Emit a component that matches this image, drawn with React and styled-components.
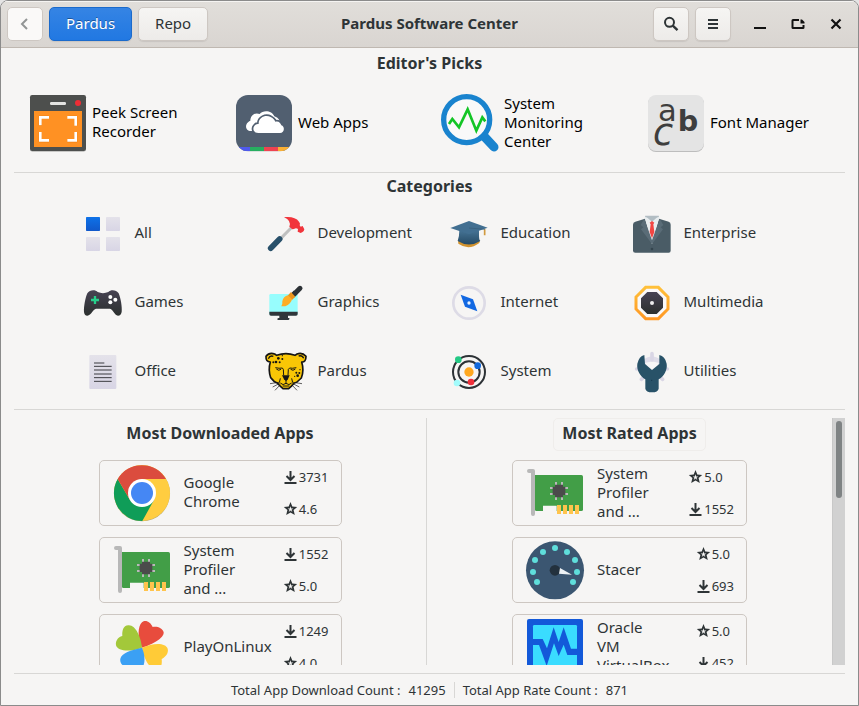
import React from "react";
import styled, { createGlobalStyle, css } from "styled-components";

const Global = createGlobalStyle`
  *, *::before, *::after { box-sizing: border-box; }
  body {
    margin: 0;
    background: #e4e4e4;
    color: #2e3436;
    font-family: "Noto Sans", "Open Sans", sans-serif;
    font-size: 15px;
    line-height: 19px;
  }
  button { font: inherit; color: inherit; cursor: pointer; }
  svg { display: block; flex: none; overflow: visible; }
`;

const Window = styled.div`
  display: flex;
  flex-direction: column;
  height: 100vh;
  min-width: 760px;
  background: #f6f5f4;
  border: 1px solid #8b8b8b;
  border-radius: 8px 8px 0 0;
  overflow: hidden;
`;

const HeaderBar = styled.header`
  display: grid;
  grid-template-columns: 1fr auto 1fr;
  align-items: center;
  flex: none;
  height: 47px;
  padding: 0 6px;
  background: linear-gradient(#e1deda, #d9d5d1);
  border-bottom: 1px solid #bfb8b1;
  box-shadow: inset 0 1px #f5f4f2;
`;

const HeaderGroup = styled.div`
  display: flex;
  align-items: center;
  gap: 6px;
  justify-content: ${(p) => (p.$end ? "flex-end" : "flex-start")};
`;

const HeaderTitle = styled.h1`
  margin: 0;
  padding-bottom: 2px;
  font-size: 15px;
  font-weight: 700;
`;

const HeaderButton = styled.button`
  display: flex;
  align-items: center;
  justify-content: center;
  height: 34px;
  min-width: 36px;
  padding: 0 ${(p) => (p.$text ? 16 : 0)}px ${(p) => (p.$text ? 2 : 0)}px;
  border: 1px solid #cdc7c2;
  border-radius: 5px;
  background: linear-gradient(#f6f5f3, #edebe9);
  box-shadow: 0 1px 1px rgba(0, 0, 0, 0.08);
  ${(p) => p.$flat && css`background: #faf9f8; box-shadow: none; color: #929595;`}
  ${(p) =>
    p.$active &&
    css`
      color: #fff;
      border-color: #1b6acb;
      background: linear-gradient(#3584e4, #2178e2);
      text-shadow: 0 -1px rgba(0, 0, 0, 0.35);
    `}
`;

const WindowControls = styled.div`
  display: flex;
  gap: 6px;
  margin-left: 7px;
`;

const WindowControl = styled.button`
  display: grid;
  place-items: center;
  width: 32px;
  height: 32px;
  padding: 0;
  border: 0;
  background: none;
`;

const Main = styled.main`
  display: flex;
  flex-direction: column;
  flex: 1;
  min-height: 0;
  padding: 5px 13px 0;
`;

const SectionTitle = styled.h2`
  margin: 0;
  font-size: 16px;
  font-weight: 700;
  line-height: 20px;
  text-align: center;
`;

const Rule = styled.hr`
  flex: none;
  width: 100%;
  height: 1px;
  margin: 0;
  border: 0;
  background: #d8d7d5;
`;

const Picks = styled.div`
  display: grid;
  grid-template-columns: repeat(4, 1fr);
  padding: 12px 3px 11px 4px;
`;

const Pick = styled.button`
  display: flex;
  align-items: center;
  gap: 6px;
  height: 76px;
  padding: 0 12px;
  border: 0;
  background: none;
  color: #000;
  text-align: left;
`;

const Label = styled.span`
  padding-bottom: 2px;
  white-space: pre-line;
`;

const CategoryTitle = styled(SectionTitle)`
  margin: 3px 0 2px;
`;

const Categories = styled.div`
  display: grid;
  grid-template-columns: repeat(4, 183px);
  justify-content: center;
  margin-bottom: 4px;
`;

const Category = styled.button`
  display: flex;
  align-items: center;
  gap: 8px;
  height: 69px;
  padding: 0 15px;
  border: 0;
  background: none;
  text-align: left;
`;

const Lists = styled.div`
  display: grid;
  grid-template-columns: 412fr 1px 405fr 13px;
  flex: 1;
  min-height: 0;
  margin: 8px 0;
  overflow: hidden;
`;

const ListColumn = styled.section`
  display: flex;
  flex-direction: column;
  align-items: center;
  min-height: 0;
  overflow: hidden;
`;

const ListTitle = styled.h2`
  flex: none;
  margin: 0 0 9px;
  padding: 5px 8px 7px;
  font-size: 16px;
  font-weight: 700;
  line-height: 19px;
  border: 1px solid ${(p) => (p.$framed ? "#efedeb" : "transparent")};
  border-radius: 5px;
`;

const ListDivider = styled.div`
  background: #d8d7d5;
`;

const Cards = styled.div`
  display: flex;
  flex-direction: column;
  gap: 11px;
  width: ${(p) => p.$width}px;
`;

const Card = styled.button`
  display: flex;
  align-items: center;
  flex: none;
  height: 66px;
  padding: 0 12px 0 14px;
  border: 1px solid #cdc7c2;
  border-radius: 5px;
  background: none;
  text-align: left;
`;

const CardName = styled(Label)`
  flex: 1;
  margin-left: 14px;
`;

const Stats = styled.span`
  display: flex;
  flex-direction: column;
  gap: 14px;
  font-size: 13px;
  line-height: 18px;
`;

const Stat = styled.span`
  display: flex;
  align-items: center;
`;

const ScrollTrack = styled.div`
  padding: 3px 3px 0 3px;
  background: #d1d1d1;
  border-left: 1px solid #c8c8c8;
`;

const ScrollThumb = styled.div`
  width: 6px;
  height: 77px;
  border-radius: 3px;
  background: #7f8384;
`;

const StatusBar = styled.footer`
  display: flex;
  align-items: center;
  justify-content: center;
  gap: 8px;
  flex: none;
  height: 31px;
  font-size: 13px;
  line-height: 16px;
`;

const StatusDivider = styled.span`
  width: 1px;
  height: 16px;
  background: #d8d7d5;
`;

const StatusItem = styled.span`
  display: flex;
  gap: 8px;
`;

function Icon({ box, size = 48, children }) {
  return (
    <svg width={size} height={size} viewBox={box} aria-hidden="true">
      {children}
    </svg>
  );
}

const AppIcon = (props) => <Icon size={56} {...props} />;

const PeekIcon = () => (
  <AppIcon box="90 45 168 168">
    <rect x="90" y="46" width="168" height="169" rx="7" fill="#b9b9b7" />
    <rect x="90" y="45" width="168" height="168" rx="7" fill="#4d4f4d" />
    <rect x="150" y="66" width="48" height="9" rx="4" fill="#e4e4e2" />
    <circle cx="234" cy="69" r="9" fill="#ee2d35" />
    <rect x="102" y="93" width="144" height="108" fill="#ff9123" />
    <path d="M121 137V112H147M205 112H227V137M227 156V182H202M147 182H121V156" fill="none" stroke="#e27508" strokeWidth="9" />
    <path d="M121 136V112H147M202 112H227V137M227 156V181H202M147 181H121V156" fill="none" stroke="#fff" strokeWidth="8" />
  </AppIcon>
);

const WebAppsIcon = () => (
  <AppIcon box="708 45 168 168">
    <clipPath id="web-clip">
      <rect x="708" y="45" width="168" height="169" rx="36" />
    </clipPath>
    <g clipPath="url(#web-clip)">
      <rect x="708" y="45" width="168" height="169" fill="#515f70" />
      <rect x="708" y="201" width="42" height="13" fill="#4f5aed" />
      <rect x="750" y="201" width="42" height="13" fill="#27ae60" />
      <rect x="792" y="201" width="42" height="13" fill="#ef4351" />
      <rect x="834" y="201" width="42" height="13" fill="#fbb034" />
    </g>
    <path d="M753 153C741 153 736 143 739 134C741 127 747 124 751 122C751 105 766 96 779 102C790 88 817 92 823 109C830 111 835 115 838 121L836 140L770 153Z" fill="#fff" />
    <path d="M775 159C760 159 757 146 763 138C766 133 771 131 776 132C775 111 798 103 812 111C820 115 824 120 826 125C835 122 842 128 844 136C856 140 853 159 840 159Z" fill="#fff" stroke="#515f70" strokeWidth="10" paintOrder="stroke" />
  </AppIcon>
);

const MonitorIcon = () => (
  <AppIcon box="39 45 168 168">
    <path d="M166 170L195 201" stroke="#1983ce" strokeWidth="27" strokeLinecap="round" />
    <circle cx="113" cy="119" r="69" fill="#f9f9f9" stroke="#1983ce" strokeWidth="16" />
    <path d="M60 132L70 117L90 142L116 88L142 152L160 112L169 124" fill="none" stroke="#13c526" strokeWidth="8" />
  </AppIcon>
);

const FontIcon = () => (
  <AppIcon box="657 45 168 168">
    <rect x="657" y="47" width="168" height="169" rx="24" fill="#bdbdbd" />
    <rect x="657" y="45" width="168" height="168" rx="24" fill="#e4e4e4" />
    <g fill="#3e3e3e">
      <text x="687" y="123" fontFamily="DejaVu Sans" fontSize="92">a</text>
      <text x="746" y="152" fontFamily="DejaVu Sans" fontWeight="700" fontSize="86">b</text>
      <text x="672" y="194" fontFamily="DejaVu Sans" fontStyle="italic" fontSize="110">c</text>
    </g>
  </AppIcon>
);

const AllIcon = () => (
  <Icon box="57 27 144 144">
    <linearGradient id="all-blue" x1="0" y1="0" x2="0" y2="1">
      <stop stopColor="#0e72e8" />
      <stop offset="1" stopColor="#1158ca" />
    </linearGradient>
    <linearGradient id="pale" x1="0" y1="0" x2="0" y2="1">
      <stop stopColor="#e4e2ea" />
      <stop offset="1" stopColor="#d8d5e5" />
    </linearGradient>
    <rect x="78" y="51" width="42" height="42" rx="2" fill="url(#all-blue)" />
    <rect x="138" y="51" width="42" height="42" rx="2" fill="url(#pale)" />
    <rect x="78" y="111" width="42" height="42" rx="2" fill="url(#pale)" />
    <rect x="138" y="111" width="42" height="42" rx="2" fill="url(#pale)" />
  </Icon>
);

const HammerIcon = () => (
  <Icon box="606 27 144 144">
    <path d="M699 78L659 119" stroke="#bfc0c0" strokeWidth="9" />
    <path d="M659 117L632 145" stroke="#28506a" strokeWidth="17" strokeLinecap="round" />
    <path d="M672 52C691 49 709 53 717 65Q722 70 719 76L722 80L728 78L733 88Q732 96 722 99L713 95L714 87Q708 82 702 87L697 88L688 80Q695 62 672 52Z" fill="#f1353c" />
  </Icon>
);

const EducationIcon = () => (
  <Icon box="48 27 144 144">
    <linearGradient id="cap" x1="0" y1="0" x2="0" y2="1">
      <stop stopColor="#457394" />
      <stop offset="1" stopColor="#254a65" />
    </linearGradient>
    <path d="M87 119Q120 137 153 119L151 129Q119 153 88 131Z" fill="#d2932f" />
    <path d="M91 91H150V106Q150 121 154 123Q120 144 86 123Q91 110 91 91Z" fill="url(#cap)" />
    <path d="M64 84L120 63L176 83L120 103Z" fill="#426f91" />
    <path d="M167 88V106" stroke="#d19a3e" strokeWidth="5" />
    <path d="M120 84L168 88" stroke="#365c77" strokeWidth="2" />
  </Icon>
);

const EnterpriseIcon = () => (
  <Icon box="597 27 144 144">
    <path d="M648 48H690L687 57L669 98L651 58Z" fill="#b2bdc3" />
    <path d="M619 65L648 56L669 132L690 56L719 65Q725 67 725 74V152Q725 158 719 158H619Q612 158 612 152V74Q612 67 619 65Z" fill="#4a5c66" />
    <path d="M647 52L669 132L691 52Z" fill="#e8edef" />
    <path d="M648 47H690L669 65Z" fill="#b2bdc3" />
    <path d="M646 56L635 75L643 82L636 88L669 132L702 88L695 82L703 75L692 56L669 121Z" fill="#5a6c77" />
    <path d="M662 68L669 63L676 68L673 73L676 96L669 115L662 96L665 73Z" fill="#f34643" />
    <circle cx="669" cy="147" r="4" fill="#34454e" />
  </Icon>
);

const GamesIcon = () => (
  <Icon box="57 234 144 144">
    <linearGradient id="dark" x1="0" y1="0" x2="0" y2="1">
      <stop stopColor="#474353" />
      <stop offset="1" stopColor="#2c302f" />
    </linearGradient>
    <path d="M82 280C89 268 107 269 113 276Q129 283 145 276C152 268 169 269 176 280C182 294 187 322 185 336Q183 347 174 347C163 345 158 326 149 326H108C99 327 94 346 82 347Q73 347 72 336C71 321 76 293 82 280Z" fill="url(#dark)" />
    <path d="M105 288V312M93 300H117" stroke="#27d08c" strokeWidth="7" />
    <g fill="#fff"><circle cx="151" cy="291" r="6" /><circle cx="166" cy="299" r="6" /><circle cx="151" cy="307" r="6" /></g>
  </Icon>
);

const GraphicsIcon = () => (
  <Icon box="606 234 144 144">
    <rect x="628" y="282" width="85" height="64" rx="4" fill="#97fdfd" />
    <path d="M628 335H713V342Q713 347 708 347H684V354H688Q690 360 682 360H653Q650 353 658 354V347H633Q628 347 628 342Z" fill="#30363a" />
    <path d="M707 277L696 288" stroke="#2c3135" strokeWidth="15" />
    <path d="M720 265L703 282" stroke="#2c3135" strokeWidth="15" strokeLinecap="round" />
    <path d="M693 276L706 290L696 300L683 287Z" fill="#ec941c" />
    <path d="M684 286L696 298Q693 312 676 319H664Q668 314 667 304Q670 289 684 286Z" fill="#ffad25" />
  </Icon>
);

const InternetIcon = () => (
  <Icon box="48 234 144 144">
    <circle cx="120" cy="309" r="47" fill="none" stroke="#dddbe6" strokeWidth="8" />
    <path d="M95 284L132 298L145 334L108 320Z" fill="#1268e2" />
    <circle cx="120" cy="309" r="5" fill="#e9f3ff" />
  </Icon>
);

const MultimediaIcon = () => (
  <Icon box="597 234 144 144">
    <linearGradient id="ring" x1="0" y1="0" x2="0" y2="1">
      <stop stopColor="#ffc03a" />
      <stop offset="1" stopColor="#ff9824" />
    </linearGradient>
    <path d="M650 262H688L717 291V327L688 356H650L621 327V291Z" fill="#faf9fa" stroke="url(#ring)" strokeWidth="9" />
    <path d="M655 276H683L702 295V323L683 342H655L636 323V295Z" fill="url(#dark)" />
    <circle cx="669" cy="309" r="6" fill="#eee" />
  </Icon>
);

const OfficeIcon = () => (
  <Icon box="57 441 144 144">
    <rect x="88" y="465" width="81" height="102" rx="3" fill="url(#pale)" />
    <path d="M102 489H133M102 499H155M102 510H155M102 522H155M102 533H155M102 544H155" stroke="#3b3b40" strokeWidth="3" />
  </Icon>
);

const PardusIcon = () => (
  <Icon box="606 441 144 144">
    <g stroke="#151515" strokeWidth="5" strokeLinejoin="round">
      <path d="M618 469Q628 456 644 462L650 466Q678 456 705 466L711 462Q727 456 738 469Q738 487 725 486Q733 511 724 534L711 546Q701 548 696 557L686 566H669L659 557Q654 548 643 545L632 533Q624 509 631 486Q617 486 618 469Z" fill="#f9c606" />
    </g>
    <path d="M625 476Q630 465 640 469M716 468Q727 465 731 475" fill="none" stroke="#151515" strokeWidth="4" />
    <path d="M646 503Q658 506 667 504L670 508L671 526M709 503Q697 506 689 504L685 508L684 526M649 507Q656 514 663 508M706 507Q699 514 692 508" fill="none" stroke="#151515" strokeWidth="3" />
    <path d="M666 526H689L683 539L678 543L672 538Z" fill="#151515" />
    <path d="M678 540V550M678 550Q669 558 661 549M678 550Q687 558 695 549M661 535L658 548M695 535L698 548M668 558H688" fill="none" stroke="#151515" strokeWidth="3" />
    <path d="M657 547L630 551M659 550L638 561M661 554L645 571M699 547L726 551M697 550L718 561M695 554L711 571" stroke="#151515" strokeWidth="2" />
    <g fill="#151515">
      <circle cx="655" cy="475" r="4" /><circle cx="667" cy="477" r="3" /><circle cx="648" cy="486" r="4" /><circle cx="659" cy="487" r="3" /><circle cx="640" cy="487" r="3" /><circle cx="667" cy="467" r="2" />
      <circle cx="709" cy="518" r="3" /><circle cx="718" cy="519" r="3" /><circle cx="713" cy="527" r="4" /><circle cx="704" cy="529" r="2" /><circle cx="720" cy="509" r="2" />
    </g>
  </Icon>
);

const SystemIcon = () => (
  <Icon box="48 441 144 144">
    <g fill="none" stroke="#2d3236" strokeWidth="6">
      <circle cx="120" cy="516" r="48" />
      <circle cx="120" cy="516" r="32" />
    </g>
    <circle cx="120" cy="516" r="14" fill="#ffa820" />
    <circle cx="88" cy="479" r="10" fill="#24c985" />
    <circle cx="146" cy="497" r="10" fill="#1168dc" />
    <circle cx="126" cy="546" r="10" fill="#ef303b" />
    <circle cx="84" cy="549" r="10" fill="#a3fbfb" />
  </Icon>
);

const UtilitiesIcon = () => (
  <Icon box="597 441 144 144">
    <circle cx="669" cy="507" r="30" fill="none" stroke="#dfdde9" strokeWidth="15" />
    <path d="M669 461V480M623 507H630M708 507H715M637 538L646 530M701 538L692 530" stroke="#d9d6e5" strokeWidth="11" strokeLinecap="round" />
    <path d="M648 489L669 511L690 489L681 487H656Z" fill="#f7f6f7" />
    <path d="M646 465Q630 469 625 491C622 512 635 529 649 538V566Q651 577 669 577Q687 577 689 566V538C704 529 716 511 713 491Q708 468 691 465V492L669 510L648 492Z" fill="#285268" />
    <circle cx="668" cy="541" r="2" fill="#15394f" />
  </Icon>
);

const ChromeIcon = () => (
  <AppIcon box="99 165 168 168">
    <circle cx="183" cy="250" r="84" fill="#b7a970" />
    <circle cx="183" cy="249" r="84" fill="#ffcd40" />
    <path d="M110 207A84 84 0 0 0 184 333L219 270L147 270Z" fill="#0f9d58" />
    <path d="M110 207A84 84 0 0 1 255 207L183 207L147 270Z" fill="#db4c3e" />
    <circle cx="183" cy="249" r="42" fill="#fff" />
    <circle cx="183" cy="249" r="33" fill="#4587f4" />
  </AppIcon>
);

const BoardIcon = () => (
  <AppIcon box="111 165 168 168">
    <path d="M117 183H129V312" fill="none" stroke="#b8b8b8" strokeWidth="12" strokeLinecap="round" strokeLinejoin="round" />
    <path d="M135 195H274Q279 195 279 200V299Q279 303 274 303H200V287H159V303H139Q135 303 135 299Z" fill="#429e47" />
    <path d="M207 285V312M225 285V312M243 285V312M261 285V312" stroke="#ffc44d" strokeWidth="12" />
    <path d="M198 216V270M216 216V270M180 234H234M180 252H234" stroke="#b9b9b9" strokeWidth="6" />
    <path d="M195 224H219V230H226V255H219V262H195V255H188V230H195Z" fill="#4b4b4b" />
  </AppIcon>
);

const CloverIcon = () => (
  <AppIcon box="99 237 168 168">
    <path d="M183 323C169 295 170 258 183 247C193 237 209 246 215 261C227 258 245 263 248 277C250 294 213 315 183 323Z" fill="#e84c3d" />
    <path d="M183 323C151 336 110 335 105 316C102 299 117 288 124 288C123 273 126 257 142 256C164 254 180 292 183 323Z" fill="#a3c83a" />
    <path d="M183 323C216 308 254 307 260 326C264 341 251 353 242 357C244 374 240 388 226 389C205 390 187 350 183 323Z" fill="#ffcb37" />
    <path d="M183 323C149 330 122 339 118 356C115 373 131 383 144 381C149 397 168 403 180 389C193 376 194 348 183 323Z" fill="#3ba0f4" />
  </AppIcon>
);

const gaugeDots = [[141, 126], [129, 96], [135, 60], [159, 36], [195, 24], [231, 36], [255, 60], [261, 96], [249, 126]];

const StacerIcon = () => (
  <AppIcon box="111 6 168 168">
    <circle cx="195" cy="91" r="87" fill="#3b5671" />
    {gaugeDots.map(([x, y]) => (
      <circle key={`${x}-${y}`} cx={x} cy={y} r="9" fill="#5fdedb" />
    ))}
    <circle cx="195" cy="91" r="16" fill="#23313d" />
    <path d="M210 84L246 104L207 101Z" fill="#edf1f4" />
  </AppIcon>
);

const VirtualBoxIcon = () => (
  <AppIcon box="111 237 168 168">
    <rect x="111" y="237" width="168" height="168" rx="6" fill="#1359d9" />
    <rect x="129" y="255" width="132" height="132" rx="4" fill="#3adcff" />
    <path d="M129 297H158L171 325L191 262L206 306L221 262L243 326H261V345H232L221 314L206 348L192 310L170 378L147 315H129Z" fill="#1359d9" />
  </AppIcon>
);

const DownloadIcon = () => (
  <Icon size={16} box="0 0 16 16">
    <path d="M7.5 2V11M3.5 7L7.5 11L11.5 7M1.5 14H13.5" fill="none" stroke="#2e3436" strokeWidth="2" />
  </Icon>
);

const StarIcon = () => (
  <Icon size={16} box="0 0 16 16">
    <path d="M7.5 1L9.3 5.5L14.2 6L10.6 9.1L11.8 14L7.5 11.4L3.2 14L4.4 9.1L0.8 6L5.7 5.5ZM7.5 5.2L6.8 7.4H4.7L6.5 8.7L5.7 10.9L7.5 9.6L9.3 10.9L8.5 8.7L10.3 7.4H8.2Z" fill="#2e3436" fillRule="evenodd" />
  </Icon>
);

const BackIcon = () => (
  <Icon size={16} box="0 0 16 16">
    <path d="M10 3L5 8L10 13" fill="none" stroke="currentColor" strokeWidth="2" />
  </Icon>
);

const SearchIcon = () => (
  <Icon size={16} box="0 0 16 16">
    <circle cx="6.5" cy="6.3" r="4.5" fill="none" stroke="#2e3436" strokeWidth="2" />
    <path d="M9.8 9.6L14.5 14.2" stroke="#2e3436" strokeWidth="2.4" />
  </Icon>
);

const MenuIcon = () => (
  <Icon size={16} box="0 0 16 16">
    <path d="M3 4H13M3 8H13M3 12H13" stroke="#2e3436" strokeWidth="2" />
  </Icon>
);

const MinimizeIcon = () => (
  <Icon size={16} box="0 0 16 16">
    <path d="M2 12H14" stroke="#111" strokeWidth="2" />
  </Icon>
);

const RestoreIcon = () => (
  <Icon size={16} box="0 0 16 16">
    <path d="M9 4H3Q2.5 4 2.5 4.5V11.5Q2.5 12 3 12H13Q13.5 12 13.5 11.5V9" fill="none" stroke="#111" strokeWidth="2" />
    <path d="M10.5 3.5H12L14.5 6V7.5H10.5Z" fill="#111" />
  </Icon>
);

const CloseIcon = () => (
  <Icon size={16} box="0 0 16 16">
    <path d="M3.5 3.5L12.5 12.5M12.5 3.5L3.5 12.5" stroke="#111" strokeWidth="2.2" />
  </Icon>
);

const picks = [
  { name: "Peek Screen\nRecorder", Art: PeekIcon },
  { name: "Web Apps", Art: WebAppsIcon },
  { name: "System\nMonitoring\nCenter", Art: MonitorIcon },
  { name: "Font Manager", Art: FontIcon },
];

const categories = [
  { name: "All", Art: AllIcon },
  { name: "Development", Art: HammerIcon },
  { name: "Education", Art: EducationIcon },
  { name: "Enterprise", Art: EnterpriseIcon },
  { name: "Games", Art: GamesIcon },
  { name: "Graphics", Art: GraphicsIcon },
  { name: "Internet", Art: InternetIcon },
  { name: "Multimedia", Art: MultimediaIcon },
  { name: "Office", Art: OfficeIcon },
  { name: "Pardus", Art: PardusIcon },
  { name: "System", Art: SystemIcon },
  { name: "Utilities", Art: UtilitiesIcon },
];

const downloaded = [
  { name: "Google\nChrome", Art: ChromeIcon, downloads: "3731", rating: "4.6" },
  { name: "System\nProfiler\nand ...", Art: BoardIcon, downloads: "1552", rating: "5.0" },
  { name: "PlayOnLinux", Art: CloverIcon, downloads: "1249", rating: "4.0" },
];

const rated = [
  { name: "System\nProfiler\nand ...", Art: BoardIcon, downloads: "1552", rating: "5.0" },
  { name: "Stacer", Art: StacerIcon, downloads: "693", rating: "5.0" },
  { name: "Oracle\nVM\nVirtualBox", Art: VirtualBoxIcon, downloads: "452", rating: "5.0" },
];

function AppCard({ app, ratingFirst }) {
  const downloads = (
    <Stat key="downloads">
      <DownloadIcon />
      {app.downloads}
    </Stat>
  );
  const rating = (
    <Stat key="rating">
      <StarIcon />
      {app.rating}
    </Stat>
  );
  return (
    <Card type="button">
      <app.Art />
      <CardName>{app.name}</CardName>
      <Stats>{ratingFirst ? [rating, downloads] : [downloads, rating]}</Stats>
    </Card>
  );
}

export default function App() {
  return (
    <>
      <Global />
      <Window>
        <HeaderBar>
          <HeaderGroup>
            <HeaderButton type="button" $flat aria-label="Back"><BackIcon /></HeaderButton>
            <HeaderButton type="button" $text $active>Pardus</HeaderButton>
            <HeaderButton type="button" $text>Repo</HeaderButton>
          </HeaderGroup>
          <HeaderTitle>Pardus Software Center</HeaderTitle>
          <HeaderGroup $end>
            <HeaderButton type="button" aria-label="Search"><SearchIcon /></HeaderButton>
            <HeaderButton type="button" aria-label="Menu"><MenuIcon /></HeaderButton>
            <WindowControls>
              <WindowControl type="button" aria-label="Minimize"><MinimizeIcon /></WindowControl>
              <WindowControl type="button" aria-label="Restore"><RestoreIcon /></WindowControl>
              <WindowControl type="button" aria-label="Close"><CloseIcon /></WindowControl>
            </WindowControls>
          </HeaderGroup>
        </HeaderBar>
        <Main>
          <SectionTitle>Editor's Picks</SectionTitle>
          <Picks>
            {picks.map(({ name, Art }) => (
              <Pick type="button" key={name}>
                <Art />
                <Label>{name}</Label>
              </Pick>
            ))}
          </Picks>
          <Rule />
          <CategoryTitle>Categories</CategoryTitle>
          <Categories>
            {categories.map(({ name, Art }) => (
              <Category type="button" key={name}>
                <Art />
                <span>{name}</span>
              </Category>
            ))}
          </Categories>
          <Rule />
          <Lists>
            <ListColumn>
              <ListTitle>Most Downloaded Apps</ListTitle>
              <Cards $width={243}>
                {downloaded.map((app) => <AppCard key={app.name} app={app} />)}
              </Cards>
            </ListColumn>
            <ListDivider />
            <ListColumn>
              <ListTitle $framed>Most Rated Apps</ListTitle>
              <Cards $width={235}>
                {rated.map((app) => <AppCard key={app.name} app={app} ratingFirst />)}
              </Cards>
            </ListColumn>
            <ScrollTrack>
              <ScrollThumb />
            </ScrollTrack>
          </Lists>
          <Rule />
          <StatusBar>
            <StatusItem><span>Total App Download Count :</span><span>41295</span></StatusItem>
            <StatusDivider />
            <StatusItem><span>Total App Rate Count :</span><span>871</span></StatusItem>
          </StatusBar>
        </Main>
      </Window>
    </>
  );
}
